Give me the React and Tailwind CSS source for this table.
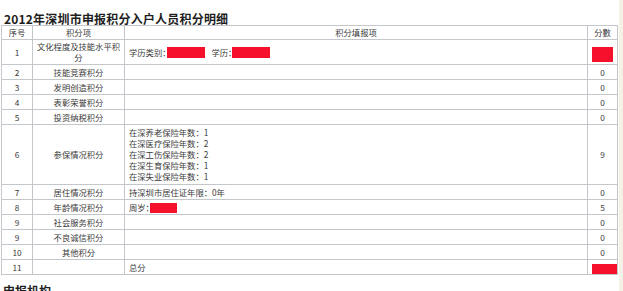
import React from "react";

const font = { fontFamily: '"Noto Sans CJK SC", "Noto Sans", sans-serif' };

function Red({ w, h, className = "" }) {
  return <span className={`inline-block align-middle bg-[#f5102c] ${w} ${h} ${className}`} />;
}

const td = "border border-[#c3c6ca] p-0 text-center";

export default function App() {
  const rows = [
    ["2", "技能竞赛积分", "", "0"],
    ["3", "发明创造积分", "", "0"],
    ["4", "表彰荣誉积分", "", "0"],
    ["5", "投资纳税积分", "", "0"],
  ];
  const rows2 = [
    ["9", "社会服务积分", "", "0"],
    ["9", "不良诚信积分", "", "0"],
    ["10", "其他积分", "", "0"],
  ];
  return (
    <div className="flex w-[623px] h-[291px] overflow-hidden bg-white" style={font}>
      <div className="flex-1 flex flex-col">
        <div className="h-[3px] bg-[#e4e4df]" />
        <div className="mt-[12px] ml-[4px] text-[12px] leading-[13px] font-bold text-[#1e1e1e] tracking-[0.2px]">
          2012年深圳市申报积分入户人员积分明细
        </div>
        <table className="ml-[1px] w-[617px] border-collapse table-fixed text-[8.3px] leading-[11px] text-[#3a3a3a]">
          <colgroup>
            <col className="w-[31px]" />
            <col className="w-[92px]" />
            <col className="w-[463px]" />
            <col className="w-[30px]" />
          </colgroup>
          <tbody>
            <tr className="h-[14px]">
              <td className={td}>序号</td>
              <td className={td}>积分项</td>
              <td className={td}>积分填报项</td>
              <td className={td}>分數</td>
            </tr>
            <tr className="h-[25px]">
              <td className={td}>1</td>
              <td className={td}>
                文化程度及技能水平积
                <br />分
              </td>
              <td className={`${td} !text-left pl-[4px]`}>
                <span className="align-middle">学历类别：</span>
                <Red w="w-[38px]" h="h-[11px]" className="ml-[-4px]" />
                <span className="align-middle ml-[7px]">学历：</span>
                <Red w="w-[38px]" h="h-[11px]" className="ml-[-4px]" />
              </td>
              <td className={`${td} pt-[4px]`}>
                <Red w="w-[21px]" h="h-[15px]" />
              </td>
            </tr>
            {rows.map((r, i) => (
              <tr key={i} className="h-[15px]">
                <td className={td}>{r[0]}</td>
                <td className={td}>{r[1]}</td>
                <td className={`${td} !text-left pl-[4px]`}>{r[2]}</td>
                <td className={td}>{r[3]}</td>
              </tr>
            ))}
            <tr className="h-[60px]">
              <td className={td}>6</td>
              <td className={td}>参保情况积分</td>
              <td className={`${td} !text-left pl-[4px]`}>
                <div>在深养老保险年数：1</div>
                <div>在深医疗保险年数：2</div>
                <div>在深工伤保险年数：2</div>
                <div>在深生育保险年数：1</div>
                <div>在深失业保险年数：1</div>
              </td>
              <td className={td}>9</td>
            </tr>
            <tr className="h-[15px]">
              <td className={td}>7</td>
              <td className={td}>居住情况积分</td>
              <td className={`${td} !text-left pl-[4px]`}>持深圳市居住证年限：0年</td>
              <td className={td}>0</td>
            </tr>
            <tr className="h-[15px]">
              <td className={td}>8</td>
              <td className={td}>年龄情况积分</td>
              <td className={`${td} !text-left pl-[4px]`}>
                <span className="align-middle">周岁：</span>
                <Red w="w-[27px]" h="h-[10px]" className="ml-[-4px]" />
              </td>
              <td className={td}>5</td>
            </tr>
            {rows2.map((r, i) => (
              <tr key={i} className="h-[15px]">
                <td className={td}>{r[0]}</td>
                <td className={td}>{r[1]}</td>
                <td className={`${td} !text-left pl-[4px]`}>{r[2]}</td>
                <td className={td}>{r[3]}</td>
              </tr>
            ))}
            <tr className="h-[15px]">
              <td className={td}>11</td>
              <td className={td}></td>
              <td className={`${td} !text-left pl-[4px]`}>总分</td>
              <td className={`${td} !text-right`}>
                <Red w="w-[25px]" h="h-[10px]" className="mt-[3px]" />
              </td>
            </tr>
          </tbody>
        </table>
        <div className="mt-[9px] ml-[3px] text-[12px] leading-[13px] font-bold text-[#1e1e1e]">
          申报机构
        </div>
      </div>
      <div className="w-[4px] bg-[#f4f2e6]" />
    </div>
  );
}
